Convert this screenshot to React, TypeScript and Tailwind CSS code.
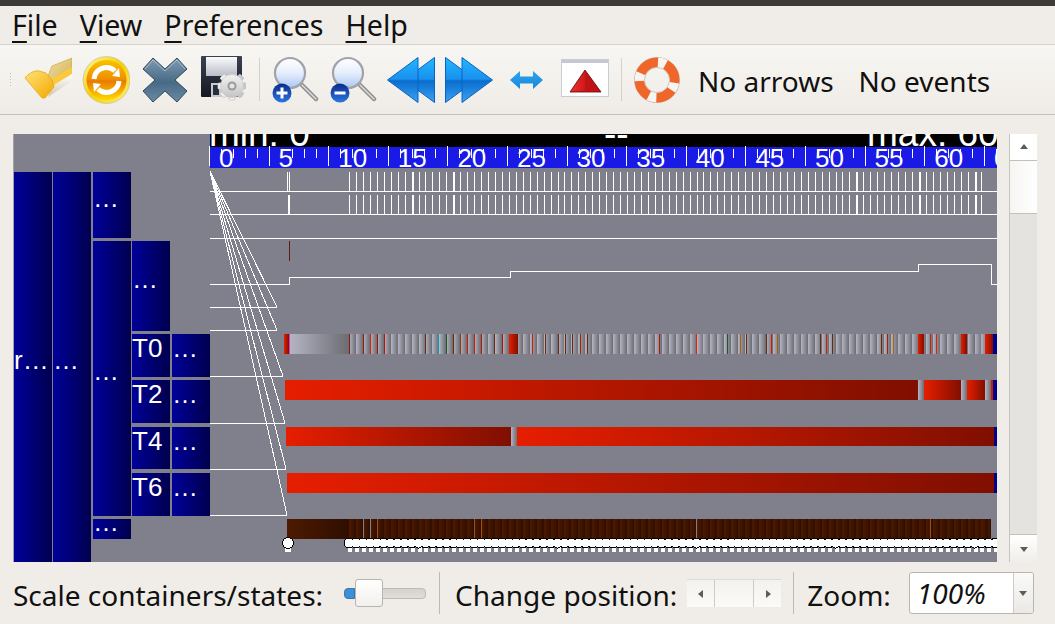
const UI_FONT = "font-['Noto_Sans',sans-serif]";

const range = (from: number, to: number, step: number) => {
  const out: number[] = [];
  for (let x = from; x <= to; x += step) out.push(x);
  return out;
};

const ticks = range(0, 13, 1).map((k) => 209 + k * 59.6);
const minorTicks = range(0, 66, 1).map((k) => 209 + k * 11.92);
const events = range(0, 93, 1).map((k) => 349 + k * 6.95);

const containers = [
  { x: 14, y: 172, w: 38, h: 390, label: "r…", ty: 369 },
  { x: 53, y: 172, w: 38, h: 390, label: "…", ty: 369 },
  { x: 93, y: 172, w: 38, h: 66, label: "…", ty: 207 },
  { x: 93, y: 241, w: 38, h: 275, label: "…", ty: 380 },
  { x: 93, y: 519, w: 38, h: 20, label: "…", ty: 531 },
  { x: 132, y: 241, w: 38, h: 90, label: "…", ty: 288 },
  { x: 132, y: 334, w: 38, h: 43, label: "T0", ty: 357 },
  { x: 132, y: 380, w: 38, h: 43, label: "T2", ty: 403 },
  { x: 132, y: 427, w: 38, h: 42, label: "T4", ty: 450 },
  { x: 132, y: 473, w: 38, h: 43, label: "T6", ty: 496 },
  { x: 172, y: 334, w: 38, h: 43, label: "…", ty: 357 },
  { x: 172, y: 380, w: 38, h: 43, label: "…", ty: 403 },
  { x: 172, y: 427, w: 38, h: 42, label: "…", ty: 450 },
  { x: 172, y: 473, w: 38, h: 43, label: "…", ty: 496 },
];

const links = [
  [277, 307],
  [277, 330],
  [283, 376],
  [285, 423],
  [286, 469],
  [287, 515],
];

const rowLines = [
  { y: 191, x2: 997 },
  { y: 214, x2: 997 },
  { y: 238, x2: 997 },
  { y: 307, x2: 277 },
  { y: 330, x2: 277 },
  { y: 376, x2: 283 },
  { y: 423, x2: 285 },
  { y: 469, x2: 286 },
  { y: 515, x2: 287 },
];

const redBars = [
  { x: 285, y: 380, w: 633, h: 20 },
  { x: 924, y: 380, w: 37, h: 20 },
  { x: 967, y: 380, w: 18, h: 20 },
  { x: 286, y: 427, w: 225, h: 19 },
  { x: 517, y: 427, w: 477, h: 19 },
  { x: 287, y: 473, w: 707, h: 20 },
];

const grayBits = [
  { x: 918, y: 380, w: 6, h: 20 },
  { x: 961, y: 380, w: 6, h: 20 },
  { x: 985, y: 380, w: 6, h: 20 },
  { x: 511, y: 427, w: 6, h: 19 },
];

const navyBits = [
  { x: 993, y: 334, h: 20 },
  { x: 993, y: 380, h: 20 },
  { x: 994, y: 427, h: 19 },
  { x: 994, y: 473, h: 20 },
];

const BROWN = "#6a2a10";
const RED = "#d01c00";
const ORANGE = "#b06000";

const t0Lines = [
  { x: 349, c: "#8a1a08" },
  { x: 363, c: "#a01a00" },
  { x: 370, c: "#e82000" },
  { x: 377, c: "#a01a00" },
  { x: 384, c: "#b01a00" },
  { x: 425, c: BROWN },
  { x: 439, c: "#40e8f8" },
  { x: 446, c: "#1c6020" },
  { x: 453, c: BROWN },
  { x: 460, c: "#9a3a08" },
  { x: 467, c: RED },
  { x: 474, c: RED },
  { x: 481, c: "#b01a00" },
  { x: 494, c: BROWN },
  { x: 502, c: "#b01a00" },
  { x: 532, c: RED },
  { x: 545, c: BROWN },
  { x: 558, c: BROWN },
  { x: 565, c: "#5a2a10" },
  { x: 572, c: BROWN },
  { x: 580, c: "#b01a00" },
  { x: 587, c: BROWN },
  { x: 659, c: "#b01a00" },
  { x: 696, c: "#e82000" },
  { x: 727, c: "#1c5a20" },
  { x: 740, c: ORANGE },
  { x: 746, c: BROWN },
  { x: 766, c: BROWN },
  { x: 771, c: RED },
  { x: 777, c: ORANGE },
  { x: 820, c: BROWN },
  { x: 826, c: RED },
  { x: 832, c: BROWN },
  { x: 881, c: BROWN },
  { x: 887, c: "#b01a00" },
  { x: 893, c: ORANGE },
  { x: 930, c: RED },
  { x: 936, c: "#e82000" },
];

const t0Blocks = [
  { x: 509, w: 9 },
  { x: 918, w: 6 },
  { x: 961, w: 6 },
  { x: 985, w: 8 },
];

const brownLines = [
  { x: 363, c: "#80808c" },
  { x: 370, c: "#80808c" },
  { x: 377, c: "#a05010" },
  { x: 474, c: "#a05010" },
  { x: 481, c: "#a05010" },
  { x: 696, c: "#80808c" },
  { x: 930, c: "#a05010" },
];

function TraceView() {
  return (
    <svg viewBox="13 134 984 428" className="block w-[984px] h-[428px] shrink-0">
      <defs>
        <linearGradient id="navy">
          <stop offset="0" stopColor="#000099" />
          <stop offset="1" stopColor="#00004d" />
        </linearGradient>
        <linearGradient id="red">
          <stop offset="0" stopColor="#e61e00" />
          <stop offset="1" stopColor="#800f00" />
        </linearGradient>
        <linearGradient id="gray">
          <stop offset="0" stopColor="#b4b4c4" />
          <stop offset="1" stopColor="#6c6c72" />
        </linearGradient>
        <linearGradient id="brown">
          <stop offset="0" stopColor="#4e1a00" />
          <stop offset="1" stopColor="#2f0e00" />
        </linearGradient>
      </defs>

      <rect x="13" y="134" width="984" height="428" fill="#80808c" shapeRendering="crispEdges" />
      <rect x="13" y="134" width="1" height="428" fill="#a4a4a4" shapeRendering="crispEdges" />

      {/* header and ruler */}
      <g shapeRendering="crispEdges">
        <rect x="210" y="134" width="787" height="13" fill="#000000" />
        <rect x="210" y="147" width="787" height="21" fill="#1a1ae6" />
        {minorTicks.map((x) => (
          <rect key={x} x={Math.round(x)} y="149" width="1" height="9" fill="#ffffff" />
        ))}
        {ticks.map((x) => (
          <rect key={x} x={Math.round(x)} y="146" width="1" height="20" fill="#ffffff" />
        ))}
      </g>
      <svg x="210" y="134" width="787" height="13" viewBox="210 134 787 13">
        <g fill="#ffffff" fontFamily="'Liberation Sans', sans-serif" fontSize="37">
          <text x="209" y="146">min: 0</text>
          <text x="604" y="146">--</text>
          <text x="867" y="146">max: 60</text>
        </g>
      </svg>
      <svg x="210" y="147" width="787" height="21" viewBox="210 147 787 21">
        <g fill="#ffffff" fontFamily="'Liberation Sans', sans-serif" fontSize="26">
          {ticks.map((x, k) => (
            <text key={k} x={x + 10} y="167">{k * 5}</text>
          ))}
        </g>
      </svg>

      {/* containers */}
      <g shapeRendering="crispEdges">
        {containers.map((c) => (
          <rect key={`${c.x}-${c.y}`} x={c.x} y={c.y} width={c.w} height={c.h} fill="url(#navy)" />
        ))}
      </g>
      <g fill="#ffffff" fontFamily="'Liberation Sans', sans-serif" fontSize="26">
        {containers.map((c) => (
          <text key={`${c.x}-${c.y}`} x={c.x} y={c.ty}>{c.label}</text>
        ))}
      </g>

      {/* event rows */}
      <g fill="#ffffff" shapeRendering="crispEdges">
        {events.filter((x) => x < 987).map((x) => {
          const thick = [412, 453, 857, 917, 973].some((t) => Math.abs(x - t) < 3);
          return (
            <g key={x}>
              <rect x={Math.round(x)} y="172" width={thick ? 2 : 1} height="19" />
              <rect x={Math.round(x)} y="195" width={thick ? 2 : 1} height="19" />
            </g>
          );
        })}
        <rect x="287" y="172" width="1" height="19" />
        <rect x="289" y="172" width="1" height="19" />
        <rect x="288" y="195" width="2" height="19" />
        <rect x="289" y="241" width="1" height="20" fill="#5a1f10" />
        {rowLines.map((l) => (
          <rect key={l.y} x="210" y={l.y} width={l.x2 - 210} height="1" />
        ))}
      </g>

      {/* variable line and hierarchy links */}
      <polyline
        points="210,284.5 289.5,284.5 289.5,277.5 510.5,277.5 510.5,271.5 918.5,271.5 918.5,264.5 991.5,264.5 991.5,284.5 997,284.5"
        fill="none"
        stroke="#ffffff"
        shapeRendering="crispEdges"
      />
      <g stroke="#ffffff" shapeRendering="crispEdges">
        {links.map(([x, y]) => (
          <line key={y} x1="210" y1="171" x2={x} y2={y} />
        ))}
      </g>

      {/* state bars */}
      <g shapeRendering="crispEdges">
        <rect x="284" y="334" width="5" height="20" fill="url(#red)" />
        <rect x="289" y="334" width="1" height="20" fill="#d040c0" />
        <rect x="290" y="334" width="59" height="20" fill="url(#gray)" />
        {events.filter((x) => x < 990).map((x) => (
          <rect key={x} x={Math.round(x)} y="334" width="7" height="20" fill="url(#gray)" />
        ))}
        {t0Lines.map((l) => (
          <rect key={l.x} x={l.x} y="334" width="1" height="20" fill={l.c} />
        ))}
        {t0Blocks.map((b) => (
          <rect key={b.x} x={b.x} y="334" width={b.w} height="20" fill="url(#red)" />
        ))}
        {redBars.map((b) => (
          <rect key={`${b.x}-${b.y}`} x={b.x} y={b.y} width={b.w} height={b.h} fill="url(#red)" />
        ))}
        {grayBits.map((b) => (
          <rect key={`${b.x}-${b.y}`} x={b.x} y={b.y} width={b.w} height={b.h} fill="url(#gray)" />
        ))}
        <rect x="991" y="380" width="2" height="20" fill="#d01800" />
        {navyBits.map((b) => (
          <rect key={b.y} x={b.x} y={b.y} width={997 - b.x} height={b.h} fill="#00008c" />
        ))}

        <rect x="287" y="519" width="62" height="20" fill="url(#brown)" />
        {events.filter((x) => x < 984).map((x) => (
          <rect key={x} x={Math.round(x)} y="519" width="7" height="20" fill="url(#brown)" />
        ))}
        <rect x="988" y="519" width="3" height="20" fill="url(#brown)" />
        {brownLines.map((l) => (
          <rect key={l.x} x={l.x} y="519" width="1" height="20" fill={l.c} />
        ))}
      </g>

      {/* event markers */}
      <g shapeRendering="crispEdges">
        <rect x="285" y="547" width="6" height="5" fill="#ffffff" />
        <circle cx="288" cy="543" r="6" fill="#000000" />
        {events.map((x) => (
          <g key={x}>
            <rect x={Math.round(x) - 1} y="547" width="4" height="5" fill="#ffffff" />
            <circle cx={x} cy="543" r="5.5" fill="#000000" />
          </g>
        ))}
        <circle cx="288" cy="543" r="5" fill="#ffffff" />
        {events.map((x) => (
          <circle key={x} cx={x} cy="543" r="4.5" fill="#ffffff" />
        ))}
      </g>
    </svg>
  );
}

function FolderIcon() {
  return (
    <svg viewBox="0 0 48 48" className="w-12 h-12 shrink-0">
      <defs>
        <linearGradient id="folderA" x1="0" y1="0" x2="1" y2="1">
          <stop offset="0" stopColor="#ffe27a" />
          <stop offset="1" stopColor="#f2a800" />
        </linearGradient>
        <linearGradient id="folderB" x1="0" y1="0" x2="1" y2="1">
          <stop offset="0" stopColor="#f0dfa0" />
          <stop offset="1" stopColor="#cfae55" />
        </linearGradient>
        <linearGradient id="folderC" x1="0" y1="0" x2="0" y2="1">
          <stop offset="0" stopColor="#ffffff" />
          <stop offset="1" stopColor="#cfc8b4" />
        </linearGradient>
      </defs>
      <path d="M24 20 L28 10 L48 2 L48 16 L28 28 Z" fill="url(#folderB)" stroke="#d0a840" strokeWidth="0.7" />
      <path d="M26 24 L48 11 L48 18 L28 32 Z" fill="#fbc93a" />
      <path d="M28 30 L48 18 L48 25 L24 41 Z" fill="url(#folderC)" />
      <path d="M1 22 C4 18 10 14 15 15 L22 17 L28 24 L30 31 L21 42 L18 42 Z" fill="url(#folderA)" stroke="#e5a000" strokeWidth="0.7" strokeLinejoin="round" />
    </svg>
  );
}

function ReloadIcon() {
  return (
    <svg viewBox="0 0 48 48" className="w-12 h-12 shrink-0">
      <defs>
        <linearGradient id="orbRing" x1="0" y1="0" x2="1" y2="1">
          <stop offset="0" stopColor="#fff6a0" />
          <stop offset="0.5" stopColor="#f4d000" />
          <stop offset="1" stopColor="#fff080" />
        </linearGradient>
        <linearGradient id="orbFill" x1="0" y1="0" x2="0" y2="1">
          <stop offset="0" stopColor="#f6c400" />
          <stop offset="0.5" stopColor="#f08a00" />
          <stop offset="0.52" stopColor="#e87a00" />
          <stop offset="1" stopColor="#ffd800" />
        </linearGradient>
      </defs>
      <circle cx="24.5" cy="24" r="23.5" fill="url(#orbRing)" stroke="#b8b8a8" strokeWidth="0.6" />
      <circle cx="24.5" cy="24" r="20" fill="url(#orbFill)" />
      <path d="M12 23 A12.5 12.5 0 0 1 33 15" fill="none" stroke="#ffffff" strokeWidth="5" />
      <path d="M37 25 A12.5 12.5 0 0 1 16 33" fill="none" stroke="#ffffff" strokeWidth="5" />
      <path d="M30 20 L38 21 L37 12 Z" fill="#ffffff" />
      <path d="M19 28 L11 27 L12 36 Z" fill="#ffffff" />
    </svg>
  );
}

function CloseIcon() {
  return (
    <svg viewBox="0 0 48 48" className="w-12 h-12 shrink-0">
      <defs>
        <linearGradient id="xFill" x1="0" y1="0" x2="0" y2="1">
          <stop offset="0" stopColor="#7f9bb2" />
          <stop offset="0.55" stopColor="#476a86" />
          <stop offset="1" stopColor="#6b8aa3" />
        </linearGradient>
      </defs>
      <path
        d="M3 13 L13 2 L25 13 L37 2 L47 13 L35 24 L47 35 L37 46 L25 35 L13 46 L3 35 L15 24 Z"
        fill="url(#xFill)"
        stroke="#33485a"
        strokeWidth="1"
        strokeLinejoin="round"
      />
      <path d="M5 13 L13 4 L25 15 L37 4 L45 13" fill="none" stroke="#b6c8d6" strokeWidth="0.8" />
    </svg>
  );
}

function SaveIcon() {
  const teeth = [0, 45, 90, 135, 180, 225, 270, 315];
  return (
    <svg viewBox="0 0 48 48" className="w-12 h-12 shrink-0">
      <defs>
        <linearGradient id="labelFill" x1="0" y1="0" x2="0" y2="1">
          <stop offset="0" stopColor="#fafafa" />
          <stop offset="1" stopColor="#b8bdc8" />
        </linearGradient>
        <linearGradient id="diskFill" x1="0" y1="0" x2="0" y2="1">
          <stop offset="0" stopColor="#3a4252" />
          <stop offset="1" stopColor="#14181f" />
        </linearGradient>
        <linearGradient id="gearFill" x1="0" y1="0" x2="0" y2="1">
          <stop offset="0" stopColor="#f2f2f2" />
          <stop offset="1" stopColor="#c4c4c4" />
        </linearGradient>
      </defs>
      <rect x="3" y="0" width="41" height="41" rx="1" fill="url(#diskFill)" />
      <rect x="8" y="1" width="31" height="19" fill="url(#labelFill)" />
      <rect x="13" y="27" width="20" height="14" fill="#c8ccd2" />
      <rect x="15" y="29" width="6" height="10" fill="#2a303a" />
      <g fill="url(#gearFill)" stroke="#c0c0c0" strokeWidth="0.5">
        {teeth.map((a) => (
          <rect key={a} x="31" y="16" width="6" height="28" rx="1" transform={`rotate(${a} 34 30)`} />
        ))}
        <circle cx="34" cy="30" r="11.5" />
      </g>
      <circle cx="34" cy="30" r="4.5" fill="#9a9a9a" />
      <circle cx="34" cy="30" r="2.5" fill="#e4e4e4" />
    </svg>
  );
}

function ZoomIcon({ id, plus }: { id: string; plus: boolean }) {
  return (
    <svg viewBox="0 0 48 48" className="w-12 h-12 shrink-0">
      <defs>
        <linearGradient id={`glass${id}`} x1="0" y1="0" x2="0" y2="1">
          <stop offset="0" stopColor="#ffffff" />
          <stop offset="0.5" stopColor="#e6eefc" />
          <stop offset="1" stopColor="#a9c6f5" />
        </linearGradient>
        <linearGradient id={`badge${id}`} x1="0" y1="0" x2="0" y2="1">
          <stop offset="0" stopColor="#0a2a8a" />
          <stop offset="1" stopColor="#2b78e0" />
        </linearGradient>
      </defs>
      <line x1="31" y1="29" x2="45" y2="43" stroke="#8e8e8e" strokeWidth="4.5" strokeLinecap="round" />
      <line x1="31" y1="29" x2="45" y2="43" stroke="#dcdcdc" strokeWidth="1.5" strokeLinecap="round" />
      <circle cx="19" cy="17" r="15" fill={`url(#glass${id})`} stroke="#a2a2a8" strokeWidth="2.2" />
      <circle cx="11" cy="37" r="9.5" fill={`url(#badge${id})`} />
      <rect x="5.5" y="35.5" width="11" height="3" fill="#ffffff" />
      {plus && <rect x="9.5" y="31.5" width="3" height="11" fill="#ffffff" />}
    </svg>
  );
}

function ArrowIcon({ id, flip }: { id: string; flip: boolean }) {
  return (
    <svg viewBox="0 0 48 48" className="w-12 h-12 shrink-0">
      <defs>
        <linearGradient id={`arrow${id}`} x1="0" y1="0" x2="0" y2="1">
          <stop offset="0" stopColor="#22b8ff" />
          <stop offset="0.48" stopColor="#1a90ee" />
          <stop offset="0.52" stopColor="#0a6ccc" />
          <stop offset="1" stopColor="#3aa4f2" />
        </linearGradient>
      </defs>
      <g
        transform={flip ? "matrix(-1 0 0 1 48 0)" : undefined}
        fill={`url(#arrow${id})`}
        stroke="#0a62c8"
        strokeWidth="1"
        strokeLinejoin="round"
      >
        <path d="M17 24 L47.5 1.5 L47.5 46.5 Z" />
        <path d="M0.5 24 L31 1.5 L31 46.5 Z" />
      </g>
    </svg>
  );
}

function FitIcon() {
  return (
    <svg viewBox="0 0 48 48" className="w-12 h-12 shrink-0">
      <defs>
        <linearGradient id="fitFill" x1="0" y1="0" x2="0" y2="1">
          <stop offset="0" stopColor="#2aa5ef" />
          <stop offset="1" stopColor="#1a86dc" />
        </linearGradient>
      </defs>
      <path d="M7 24 L17 15 L17 20.5 L30 20.5 L30 15 L40 24 L30 33 L30 27.5 L17 27.5 L17 33 Z" fill="url(#fitFill)" />
    </svg>
  );
}

function WindowIcon() {
  return (
    <svg viewBox="0 0 48 48" className="w-12 h-12 shrink-0">
      <defs>
        <linearGradient id="triLeft" x1="0" y1="0" x2="1" y2="0">
          <stop offset="0" stopColor="#f03030" />
          <stop offset="1" stopColor="#b00000" />
        </linearGradient>
      </defs>
      <rect x="0.5" y="3.5" width="47" height="37" fill="#ffffff" stroke="#c8ccd4" />
      <rect x="1" y="4" width="46" height="3" fill="#c4c8d0" />
      <path d="M24 14 L9 36 L40 36 Z" fill="url(#triLeft)" stroke="#4a0808" strokeWidth="0.8" strokeLinejoin="round" />
      <path d="M24 15 L24 35.5 L39 35.5 Z" fill="#c01414" />
    </svg>
  );
}

function HelpIcon() {
  return (
    <svg viewBox="0 0 48 48" className="w-12 h-12 shrink-0">
      <circle cx="24" cy="24" r="22.5" fill="none" stroke="#c4c6cc" strokeWidth="1" />
      <circle cx="24" cy="24" r="17.5" fill="none" stroke="#f0662a" strokeWidth="10" />
      {[-74, 22, 105, 190].map((a) => (
        <circle
          key={a}
          cx="24"
          cy="24"
          r="17.5"
          fill="none"
          stroke="#f7f5f1"
          strokeWidth="10"
          pathLength={360}
          strokeDasharray="26 334"
          transform={`rotate(${a - 13} 24 24)`}
        />
      ))}
      <circle cx="24" cy="24" r="12.5" fill="none" stroke="#d0ccc4" strokeWidth="1" />
    </svg>
  );
}

const Separator = ({ className }: { className: string }) => (
  <div className={`w-px h-[43px] bg-[#d5d2cc] shrink-0 ${className}`} />
);

const BarSeparator = ({ className }: { className: string }) => (
  <div className={`w-px h-[42px] bg-[#bdb9b3] shrink-0 ${className}`} />
);

function MenuItem({ first, rest, className }: { first: string; rest: string; className: string }) {
  return (
    <span className={className}>
      <span className="underline decoration-2 underline-offset-[5px]">{first}</span>
      {rest}
    </span>
  );
}

function Triangle({ dir }: { dir: "up" | "down" | "left" | "right" }) {
  const points = {
    up: "0,6 8,6 4,1",
    down: "0,2 8,2 4,7",
    left: "6,0 6,8 1,4",
    right: "2,0 2,8 7,4",
  }[dir];
  return (
    <svg viewBox="0 0 8 8" className="w-2 h-2">
      <polygon points={points} fill="#5c5c5c" />
    </svg>
  );
}

export default function App() {
  return (
    <div className={`w-[1055px] h-[624px] overflow-hidden flex flex-col bg-[#f0ede8] text-[#111111] ${UI_FONT}`}>
      <div className="h-[6px] bg-[#3c3b37] shrink-0" />

      <div className="h-[39px] shrink-0 flex items-center pl-[12px] text-[28.6px] border-b border-[#d6d3cd]">
        <MenuItem first="F" rest="ile" className="mr-[22px]" />
        <MenuItem first="V" rest="iew" className="mr-[22px]" />
        <MenuItem first="P" rest="references" className="mr-[22px]" />
        <MenuItem first="H" rest="elp" className="" />
      </div>

      <div className="h-[70px] shrink-0 flex items-center gap-[10px] relative pl-[24px] bg-gradient-to-b from-[#f8f6f2] to-[#efece7] border-b border-[#c4c1bb] text-[28px]">
        <div className="absolute left-[9px] top-[27px] w-[3px] h-[16px] bg-[radial-gradient(#c4c1bb_1px,transparent_1px)] bg-[length:3px_3px]" />
        <FolderIcon />
        <ReloadIcon />
        <CloseIcon />
        <SaveIcon />
        <Separator className="ml-[3px] mr-px" />
        <ZoomIcon id="In" plus />
        <ZoomIcon id="Out" plus={false} />
        <ArrowIcon id="Left" flip={false} />
        <ArrowIcon id="Right" flip />
        <FitIcon />
        <WindowIcon />
        <Separator className="ml-[2px] mr-px" />
        <HelpIcon />
        <span className="ml-[7px] mt-[2px]">No arrows</span>
        <span className="ml-[15px] mt-[2px]">No events</span>
      </div>

      <div className="h-[447px] shrink-0 flex pt-[19px] pl-[13px]">
        <TraceView />
        <div className="ml-[12px] w-[28px] h-[428px] flex flex-col bg-[#e5e3df] border-l border-[#c8c5bf]">
          <div className="h-[27px] flex items-center justify-center bg-white border-b border-[#c4c1bb]">
            <Triangle dir="up" />
          </div>
          <div className="h-[53px] bg-gradient-to-r from-[#f6f5f3] to-white border-b border-[#c4c1bb]" />
          <div className="flex-1" />
          <div className="h-[28px] flex items-center justify-center bg-gradient-to-b from-white to-[#f0eeea] border-t border-[#c4c1bb]">
            <Triangle dir="down" />
          </div>
        </div>
      </div>

      <div className="flex-1 flex items-center pl-[13px] text-[28px]">
        <span className="mt-[4px]">Scale containers/states:</span>
        <div className="ml-[21px] w-[82px] h-[28px] relative flex items-center">
          <div className="w-[11px] h-[11px] bg-[#3d8fd9] border border-[#3a76ad] rounded-l-sm" />
          <div className="w-[71px] h-[11px] bg-gradient-to-b from-[#d4d2cd] to-[#e0ded9] border border-[#bdbab4] rounded-r-sm" />
          <div className="absolute left-[11px] top-0 w-[28px] h-[28px] bg-gradient-to-b from-white to-[#f2f0ec] border border-[#b8b5af] rounded-[3px]" />
        </div>
        <BarSeparator className="ml-[13px]" />
        <span className="ml-[15px] mt-[4px]">Change position:</span>
        <div className="ml-[10px] w-[94px] h-[28px] flex bg-gradient-to-b from-[#f4f2ee] to-[#fbfaf8] border-t border-[#dcdad5]">
          <div className="w-[28px] flex items-center justify-center border-r border-[#cfccc6]">
            <Triangle dir="left" />
          </div>
          <div className="flex-1" />
          <div className="w-[28px] flex items-center justify-center border-l border-[#cfccc6]">
            <Triangle dir="right" />
          </div>
        </div>
        <BarSeparator className="ml-[12px]" />
        <span className="ml-[13px] mt-[4px]">Zoom:</span>
        <div className="ml-[18px] w-[125px] h-[42px] flex bg-white border border-[#b8b5af] rounded-[3px]">
          <div className="flex-1 flex items-center pl-[7px] italic">100%</div>
          <div className="w-[20px] flex items-center justify-center border-l border-[#cfccc6] bg-gradient-to-b from-[#fafafa] to-[#ebe9e5] rounded-r-[3px]">
            <Triangle dir="down" />
          </div>
        </div>
      </div>
    </div>
  );
}
